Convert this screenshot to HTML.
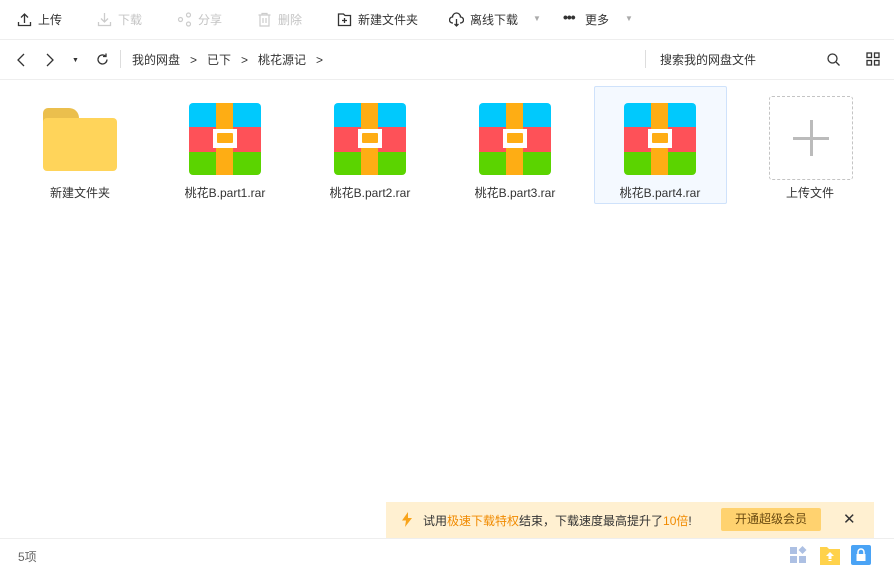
<!DOCTYPE html><html><head><meta charset="utf-8"><style>
*{margin:0;padding:0;box-sizing:border-box}
body{width:894px;height:572px;background:#fff;font-family:"Liberation Sans","Noto Sans CJK SC",sans-serif;font-size:12px;color:#333;position:relative;overflow:hidden}
.a{position:absolute;white-space:nowrap}
.g{color:#c4c4c4}
.rar{position:absolute;width:72px;height:72px;border-radius:4px;overflow:hidden}
.rar i{position:absolute;left:0;width:72px}
.lbl{position:absolute;top:184px;width:140px;text-align:center;font-size:12px;color:#333}
</style></head><body>
<!-- toolbar -->
<svg class="a" style="left:17px;top:12px" width="15" height="15" viewBox="0 0 15 15" fill="none" stroke="#333" stroke-width="1.3"><path d="M7.5 11V2M4 5.5l3.5-3.5 3.5 3.5M1.5 10v3.5h12V10"/></svg>
<div class="a" style="left:38px;top:11px">上传</div>
<svg class="a" style="left:97px;top:12px" width="15" height="15" viewBox="0 0 15 15" fill="none" stroke="#ccc" stroke-width="1.3"><path d="M7.5 1v9M4 6.5l3.5 3.5 3.5-3.5M1.5 10v3.5h12V10"/></svg>
<div class="a g" style="left:118px;top:11px">下载</div>
<svg class="a" style="left:177px;top:12px" width="15" height="15" viewBox="0 0 15 15" fill="none" stroke="#ccc" stroke-width="1.2"><circle cx="3.5" cy="7.5" r="2"/><circle cx="11.5" cy="3" r="2"/><circle cx="11.5" cy="12" r="2"/></svg>
<div class="a g" style="left:198px;top:11px">分享</div>
<svg class="a" style="left:257px;top:12px" width="15" height="15" viewBox="0 0 15 15" fill="none" stroke="#ccc" stroke-width="1.2"><path d="M1.5 3h12M5 3V1.5h5V3M3 3v11h9V3M6 6v5M9 6v5"/></svg>
<div class="a g" style="left:278px;top:11px">删除</div>
<svg class="a" style="left:337px;top:12px" width="15" height="15" viewBox="0 0 15 15" fill="none" stroke="#333" stroke-width="1.3"><path d="M1.5 2h5l1.5 1.5h5.5v10h-12zM7.5 6v5M5 8.5h5"/></svg>
<div class="a" style="left:358px;top:11px">新建文件夹</div>
<svg class="a" style="left:449px;top:12px" width="15" height="15" viewBox="0 0 15 15" fill="none" stroke="#333" stroke-width="1.3"><path d="M4 11H3.5a3 3 0 0 1 0-6 4 4 0 0 1 8 0 3 3 0 0 1 0 6H11M7.5 7v7M5.5 12l2 2 2-2"/></svg>
<div class="a" style="left:470px;top:11px">离线下载</div>
<div class="a" style="left:533px;top:14px;color:#aaa;font-size:8px">▼</div>
<div class="a" style="left:563px;top:9px;font-size:14px;font-weight:bold;letter-spacing:-1px">•••</div>
<div class="a" style="left:585px;top:11px">更多</div>
<div class="a" style="left:625px;top:14px;color:#aaa;font-size:8px">▼</div>
<div class="a" style="left:0;top:39px;width:894px;height:1px;background:#eee"></div>
<!-- nav -->
<svg class="a" style="left:15px;top:53px" width="12" height="14" viewBox="0 0 12 14" fill="none" stroke="#333" stroke-width="1.3"><path d="M9 1L3 7l6 6"/></svg>
<svg class="a" style="left:44px;top:53px" width="12" height="14" viewBox="0 0 12 14" fill="none" stroke="#333" stroke-width="1.3"><path d="M3 1l6 6-6 6"/></svg>
<div class="a" style="left:72px;top:57px;font-size:7px">▼</div>
<svg class="a" style="left:95px;top:52px" width="15" height="15" viewBox="0 0 15 15" fill="none" stroke="#333" stroke-width="1.3"><path d="M12 7.5a4.5 4.5 0 1 1-1.5-3.4"/><path d="M11 1.5v3h-3" /></svg>
<div class="a" style="left:120px;top:50px;width:1px;height:18px;background:#ddd"></div>
<div class="a" style="left:132px;top:51px">我的网盘 &nbsp; &gt; &nbsp; 已下 &nbsp; &gt; &nbsp; 桃花源记 &nbsp; &gt;</div>
<div class="a" style="left:645px;top:50px;width:1px;height:18px;background:#ddd"></div>
<div class="a" style="left:660px;top:51px">搜索我的网盘文件</div>
<svg class="a" style="left:826px;top:52px" width="15" height="15" viewBox="0 0 15 15" fill="none" stroke="#333" stroke-width="1.3"><circle cx="6.5" cy="6.5" r="4.5"/><path d="M10 10l3.5 3.5"/></svg>
<svg class="a" style="left:866px;top:52px" width="14" height="14" viewBox="0 0 14 14" fill="none" stroke="#333" stroke-width="1.3"><rect x="1" y="1" width="4.5" height="4.5"/><rect x="8.5" y="1" width="4.5" height="4.5"/><rect x="1" y="8.5" width="4.5" height="4.5"/><rect x="8.5" y="8.5" width="4.5" height="4.5"/></svg>
<div class="a" style="left:0;top:79px;width:894px;height:1px;background:#eee"></div>
<!-- selected -->
<div class="a" style="left:594px;top:86px;width:133px;height:118px;background:#f4f9ff;border:1px solid #cfe2fb;border-radius:2px"></div>
<!-- folder -->
<div class="a" style="left:43px;top:108px;width:36px;height:16px;background:#ebbf4d;border-radius:5px 10px 0 0"></div>
<div class="a" style="left:43px;top:118px;width:74px;height:53px;background:#ffd45a;border-radius:4px"></div>
<div class="lbl" style="left:10px">新建文件夹</div>
<!-- rars -->
<div class="rar" style="left:189px;top:103px"><i style="top:0;height:24px;background:#00c9fd"></i><i style="top:24px;height:25px;background:#fe5158"></i><i style="top:49px;height:23px;background:#5bd400"></i><i style="left:27px;width:17px;top:0;height:72px;background:#fead14"></i><i style="left:24px;width:24px;top:26px;height:19px;background:#fff"></i><i style="left:28px;width:16px;top:30px;height:10px;background:#fead14;border-radius:1px"></i></div>
<div class="lbl" style="left:155px">桃花B.part1.rar</div>
<div class="rar" style="left:334px;top:103px"><i style="top:0;height:24px;background:#00c9fd"></i><i style="top:24px;height:25px;background:#fe5158"></i><i style="top:49px;height:23px;background:#5bd400"></i><i style="left:27px;width:17px;top:0;height:72px;background:#fead14"></i><i style="left:24px;width:24px;top:26px;height:19px;background:#fff"></i><i style="left:28px;width:16px;top:30px;height:10px;background:#fead14;border-radius:1px"></i></div>
<div class="lbl" style="left:300px">桃花B.part2.rar</div>
<div class="rar" style="left:479px;top:103px"><i style="top:0;height:24px;background:#00c9fd"></i><i style="top:24px;height:25px;background:#fe5158"></i><i style="top:49px;height:23px;background:#5bd400"></i><i style="left:27px;width:17px;top:0;height:72px;background:#fead14"></i><i style="left:24px;width:24px;top:26px;height:19px;background:#fff"></i><i style="left:28px;width:16px;top:30px;height:10px;background:#fead14;border-radius:1px"></i></div>
<div class="lbl" style="left:445px">桃花B.part3.rar</div>
<div class="rar" style="left:624px;top:103px"><i style="top:0;height:24px;background:#00c9fd"></i><i style="top:24px;height:25px;background:#fe5158"></i><i style="top:49px;height:23px;background:#5bd400"></i><i style="left:27px;width:17px;top:0;height:72px;background:#fead14"></i><i style="left:24px;width:24px;top:26px;height:19px;background:#fff"></i><i style="left:28px;width:16px;top:30px;height:10px;background:#fead14;border-radius:1px"></i></div>
<div class="lbl" style="left:590px">桃花B.part4.rar</div>
<!-- upload -->
<div class="a" style="left:769px;top:96px;width:84px;height:84px;border:1px dashed #c4c4c4;border-radius:3px"></div>
<div class="a" style="left:793px;top:137px;width:36px;height:3px;background:#bbb"></div>
<div class="a" style="left:810px;top:120px;width:3px;height:36px;background:#bbb"></div>
<div class="lbl" style="left:740px">上传文件</div>
<!-- banner -->
<div class="a" style="left:386px;top:502px;width:488px;height:36px;background:#fff0d1"></div>
<svg class="a" style="left:401px;top:512px" width="12" height="15" viewBox="0 0 12 15"><path d="M7 0L1 8.5h4L4 15l7-9H7z" fill="#f8a41c"/></svg>
<div class="a" style="left:423px;top:512px">试用<span style="color:#f08a00">极速下载特权</span>结束，下载速度最高提升了<span style="color:#f08a00">10倍</span>!</div>
<div class="a" style="left:721px;top:508px;width:100px;height:23px;background:#ffd26f;border-radius:2px;text-align:center;line-height:23px;color:#6a4a10">开通超级会员</div>
<div class="a" style="left:843px;top:510px;font-size:15px;color:#333">✕</div>
<div class="a" style="left:0;top:538px;width:894px;height:1px;background:#eee"></div>
<!-- footer -->
<div class="a" style="left:18px;top:548px;color:#666">5项</div>
<svg class="a" style="left:790px;top:546px" width="18" height="18" viewBox="0 0 18 18" fill="#adc0e3"><rect x="0" y="1" width="7" height="7"/><rect x="0" y="10" width="7" height="7"/><rect x="9" y="10" width="7" height="7"/><path d="M12.5 0l4 4-4 4-4-4z"/></svg>
<svg class="a" style="left:820px;top:545px" width="20" height="20" viewBox="0 0 20 20"><path d="M0 2h7l2 2h11v16H0z" fill="#ffd24b"/><path d="M10 7l-4 4h2.5v3h3v-3H14z" fill="#fff"/><rect x="8.5" y="15" width="3" height="1" fill="#fff"/></svg>
<svg class="a" style="left:851px;top:545px" width="20" height="20" viewBox="0 0 20 20"><rect width="20" height="20" rx="2" fill="#4aa3f5"/><rect x="5.5" y="9" width="9" height="7" fill="#fff"/><path d="M7 9V7a3 3 0 0 1 6 0v2" fill="none" stroke="#fff" stroke-width="1.5"/></svg>
</body></html>
